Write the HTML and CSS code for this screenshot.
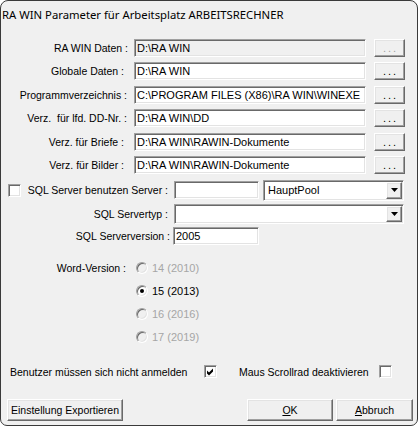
FILE: index.html
```html
<!DOCTYPE html>
<html lang="de">
<head>
<meta charset="utf-8">
<title>RA WIN Parameter</title>
<link rel="stylesheet" href="styles.css">
</head>
<body>
<div class="window">
  <div class="titlebar">RA WIN Parameter für Arbeitsplatz ARBEITSRECHNER</div>
  <div class="client">
    <div class="paths">
      <div class="row">
        <span class="lbl">RA WIN Daten :</span>
        <span class="field sunken path-field is-disabled">D:\RA WIN</span>
        <span class="btn dots dots-disabled">...</span>
      </div>
      <div class="row">
        <span class="lbl short">Globale Daten :</span>
        <span class="field sunken path-field">D:\RA WIN</span>
        <span class="btn dots">...</span>
      </div>
      <div class="row">
        <span class="lbl mid">Programmverzeichnis :</span>
        <span class="field sunken path-field">C:\PROGRAM FILES (X86)\RA WIN\WINEXE</span>
        <span class="btn dots">...</span>
      </div>
      <div class="row">
        <span class="lbl mid">Verz.&nbsp; für lfd. DD-Nr. :</span>
        <span class="field sunken path-field">D:\RA WIN\DD</span>
        <span class="btn dots">...</span>
      </div>
      <div class="row">
        <span class="lbl short">Verz. für Briefe :</span>
        <span class="field sunken path-field">D:\RA WIN\RAWIN-Dokumente</span>
        <span class="btn dots">...</span>
      </div>
      <div class="row">
        <span class="lbl short">Verz. für Bilder :</span>
        <span class="field sunken path-field">D:\RA WIN\RAWIN-Dokumente</span>
        <span class="btn dots">...</span>
      </div>
    </div>

    <div class="sql-row">
      <span class="check sunken"></span>
      <span class="sql-lbl">SQL Server benutzen Server :</span>
      <span class="field sunken server-field"></span>
      <span class="combo sunken pool-combo">
        <span class="combo-text">HauptPool</span>
        <span class="btn arrow"><svg width="7" height="4" viewBox="0 0 7 4"><polygon points="0,0 7,0 3.5,4" fill="#000"/></svg></span>
      </span>
    </div>

    <div class="typ-row">
      <span class="typ-lbl">SQL Servertyp :</span>
      <span class="combo sunken typ-combo">
        <span class="combo-text"></span>
        <span class="btn arrow"><svg width="7" height="4" viewBox="0 0 7 4"><polygon points="0,0 7,0 3.5,4" fill="#000"/></svg></span>
      </span>
    </div>

    <div class="ver-row">
      <span class="ver-lbl">SQL Serverversion :</span>
      <span class="field sunken ver-field">2005</span>
    </div>

    <div class="word">
      <span class="word-lbl">Word-Version :</span>
      <span class="radio-item is-off"><span class="radio"></span><span>14 (2010)</span></span>
      <span class="radio-item"><span class="radio on"><span class="dot"></span></span><span>15 (2013)</span></span>
      <span class="radio-item is-off"><span class="radio"></span><span>16 (2016)</span></span>
      <span class="radio-item is-off"><span class="radio"></span><span>17 (2019)</span></span>
    </div>

    <div class="opt-row">
      <span class="opt-lbl first">Benutzer müssen sich nicht anmelden</span>
      <span class="check sunken"><svg width="11" height="11" viewBox="0 0 11 11"><polygon points="2,4.5 4,6.5 8,2.5 8,5.5 4,9.5 2,7.5" fill="#000"/></svg></span>
      <span class="opt-lbl second">Maus Scrollrad deaktivieren</span>
      <span class="check sunken"></span>
    </div>

    <div class="btn-row">
      <span class="btn push export">Einstellung Exportieren</span>
      <span class="btn push ok"><u>O</u>K</span>
      <span class="btn push cancel"><u>A</u>bbruch</span>
    </div>
  </div>
</div>
</body>
</html>
```

FILE: styles.css
```css
body {
  margin: 0;
  background: #ffffff;
  font-family: "Liberation Sans", Arial, sans-serif;
  font-size: 10.5px;
  color: #000;
}

.window {
  width: 418px;
  height: 426px;
  box-sizing: border-box;
  border: 1px solid #3a3a3a;
  border-radius: 8px 8px 7px 7px;
  background: #f0f0f0;
  overflow: hidden;
  display: flex;
  flex-direction: column;
}

.titlebar {
  height: 29px;
  line-height: 27px;
  padding-left: 1px;
  font-family: "Noto Sans", sans-serif;
  font-size: 11.3px;
  white-space: nowrap;
  color: #000;
}

.client {
  flex: 1;
  display: flex;
  flex-direction: column;
  padding-top: 9px;
}

/* 3D edges */
.sunken {
  box-sizing: border-box;
  border: 1px solid;
  border-color: #a0a0a0 #ffffff #ffffff #a0a0a0;
  box-shadow: inset 1px 1px #696969, inset -1px -1px #e3e3e3;
  background: #ffffff;
}

.btn {
  box-sizing: border-box;
  border: 1px solid;
  border-color: #ffffff #696969 #696969 #ffffff;
  box-shadow: inset -1px -1px #a0a0a0, inset 1px 1px #e3e3e3;
  background: #f0f0f0;
  display: flex;
  align-items: center;
  justify-content: center;
  flex: none;
}

/* path rows */
.paths {
  display: flex;
  flex-direction: column;
  row-gap: 5.4px;
}

.row {
  display: flex;
  align-items: center;
  height: 18px;
}

.lbl {
  width: 127px;
  box-sizing: border-box;
  text-align: right;
  white-space: nowrap;
  flex: none;
}
.lbl.short { padding-right: 4px; }
.lbl.mid { padding-right: 1px; }

.field {
  height: 18px;
  padding: 0 2px 0 2px;
  line-height: 16px;
  font-size: 11px;
  white-space: nowrap;
  overflow: hidden;
  flex: none;
}

.path-field {
  width: 232px;
  margin-left: 6px;
}

.is-disabled { background: #f0f0f0; }

.dots {
  width: 31px;
  height: 18px;
  margin-left: 8px;
  font-size: 11px;
  letter-spacing: 2px;
  padding-left: 2px;
  line-height: 14px;
}
.dots-disabled { color: #a0a0a0; }

/* SQL rows */
.sql-row {
  display: flex;
  align-items: center;
  height: 21px;
  margin-top: 6px;
}

.check {
  width: 13px;
  height: 13px;
  flex: none;
  display: flex;
  align-items: center;
  justify-content: center;
}
.sql-row .check { margin-left: 7px; }

.sql-lbl {
  width: 147px;
  text-align: right;
  white-space: nowrap;
  flex: none;
}

.server-field {
  width: 85px;
  margin-left: 6px;
}

.combo {
  display: flex;
  align-items: stretch;
  padding: 1px;
  flex: none;
}
.combo-text {
  flex: 1;
  padding-left: 3px;
  font-size: 11px;
  display: flex;
  align-items: center;
}
.arrow {
  width: 16px;
}

.pool-combo {
  width: 141px;
  height: 21px;
  margin-left: 4px;
}

.typ-row {
  display: flex;
  align-items: center;
  height: 20px;
  margin-top: 3px;
}
.typ-lbl {
  width: 167px;
  text-align: right;
  white-space: nowrap;
  flex: none;
}
.typ-combo {
  width: 230px;
  height: 20px;
  margin-left: 6px;
}

.ver-row {
  display: flex;
  align-items: center;
  height: 18px;
  margin-top: 3px;
}
.ver-lbl {
  width: 169px;
  text-align: right;
  white-space: nowrap;
  flex: none;
}
.ver-field {
  width: 86px;
  margin-left: 3px;
}

/* Word version radios */
.word {
  display: grid;
  grid-template-columns: 125px auto;
  grid-auto-rows: 18px;
  row-gap: 5px;
  margin-top: 14px;
  align-items: center;
}
.word-lbl {
  grid-row: 1;
  grid-column: 1;
  text-align: right;
  white-space: nowrap;
}
.radio-item {
  grid-column: 2;
  display: flex;
  align-items: center;
  gap: 4px;
  margin-left: 10px;
  font-size: 11px;
}
.radio-item.is-off { color: #a6a6a6; }

.radio {
  width: 12px;
  height: 12px;
  box-sizing: border-box;
  border-radius: 50%;
  border: 1px solid;
  border-color: #a0a0a0 #ffffff #ffffff #a0a0a0;
  box-shadow: inset 1px 1px #696969, inset -1px -1px #e3e3e3;
  background: #f0f0f0;
  display: flex;
  align-items: center;
  justify-content: center;
}
.radio.on { background: #ffffff; }
.dot {
  width: 4px;
  height: 4px;
  border-radius: 50%;
  background: #000;
}

/* options row */
.opt-row {
  display: flex;
  align-items: center;
  height: 18px;
  margin-top: 17px;
}
.opt-lbl {
  white-space: nowrap;
  flex: none;
}
.opt-lbl.first {
  width: 194px;
  margin-left: 9px;
}
.opt-lbl.second {
  width: 140px;
  margin-left: 22px;
}

/* bottom buttons */
.btn-row {
  display: flex;
  height: 22px;
  margin-top: 18px;
}
.push {
  height: 22px;
  white-space: nowrap;
}
.export {
  width: 116px;
  margin-left: 6px;
}
.ok {
  width: 86px;
  margin-left: auto;
}
.cancel {
  width: 77px;
  margin-left: 3px;
  margin-right: 4px;
}
```
